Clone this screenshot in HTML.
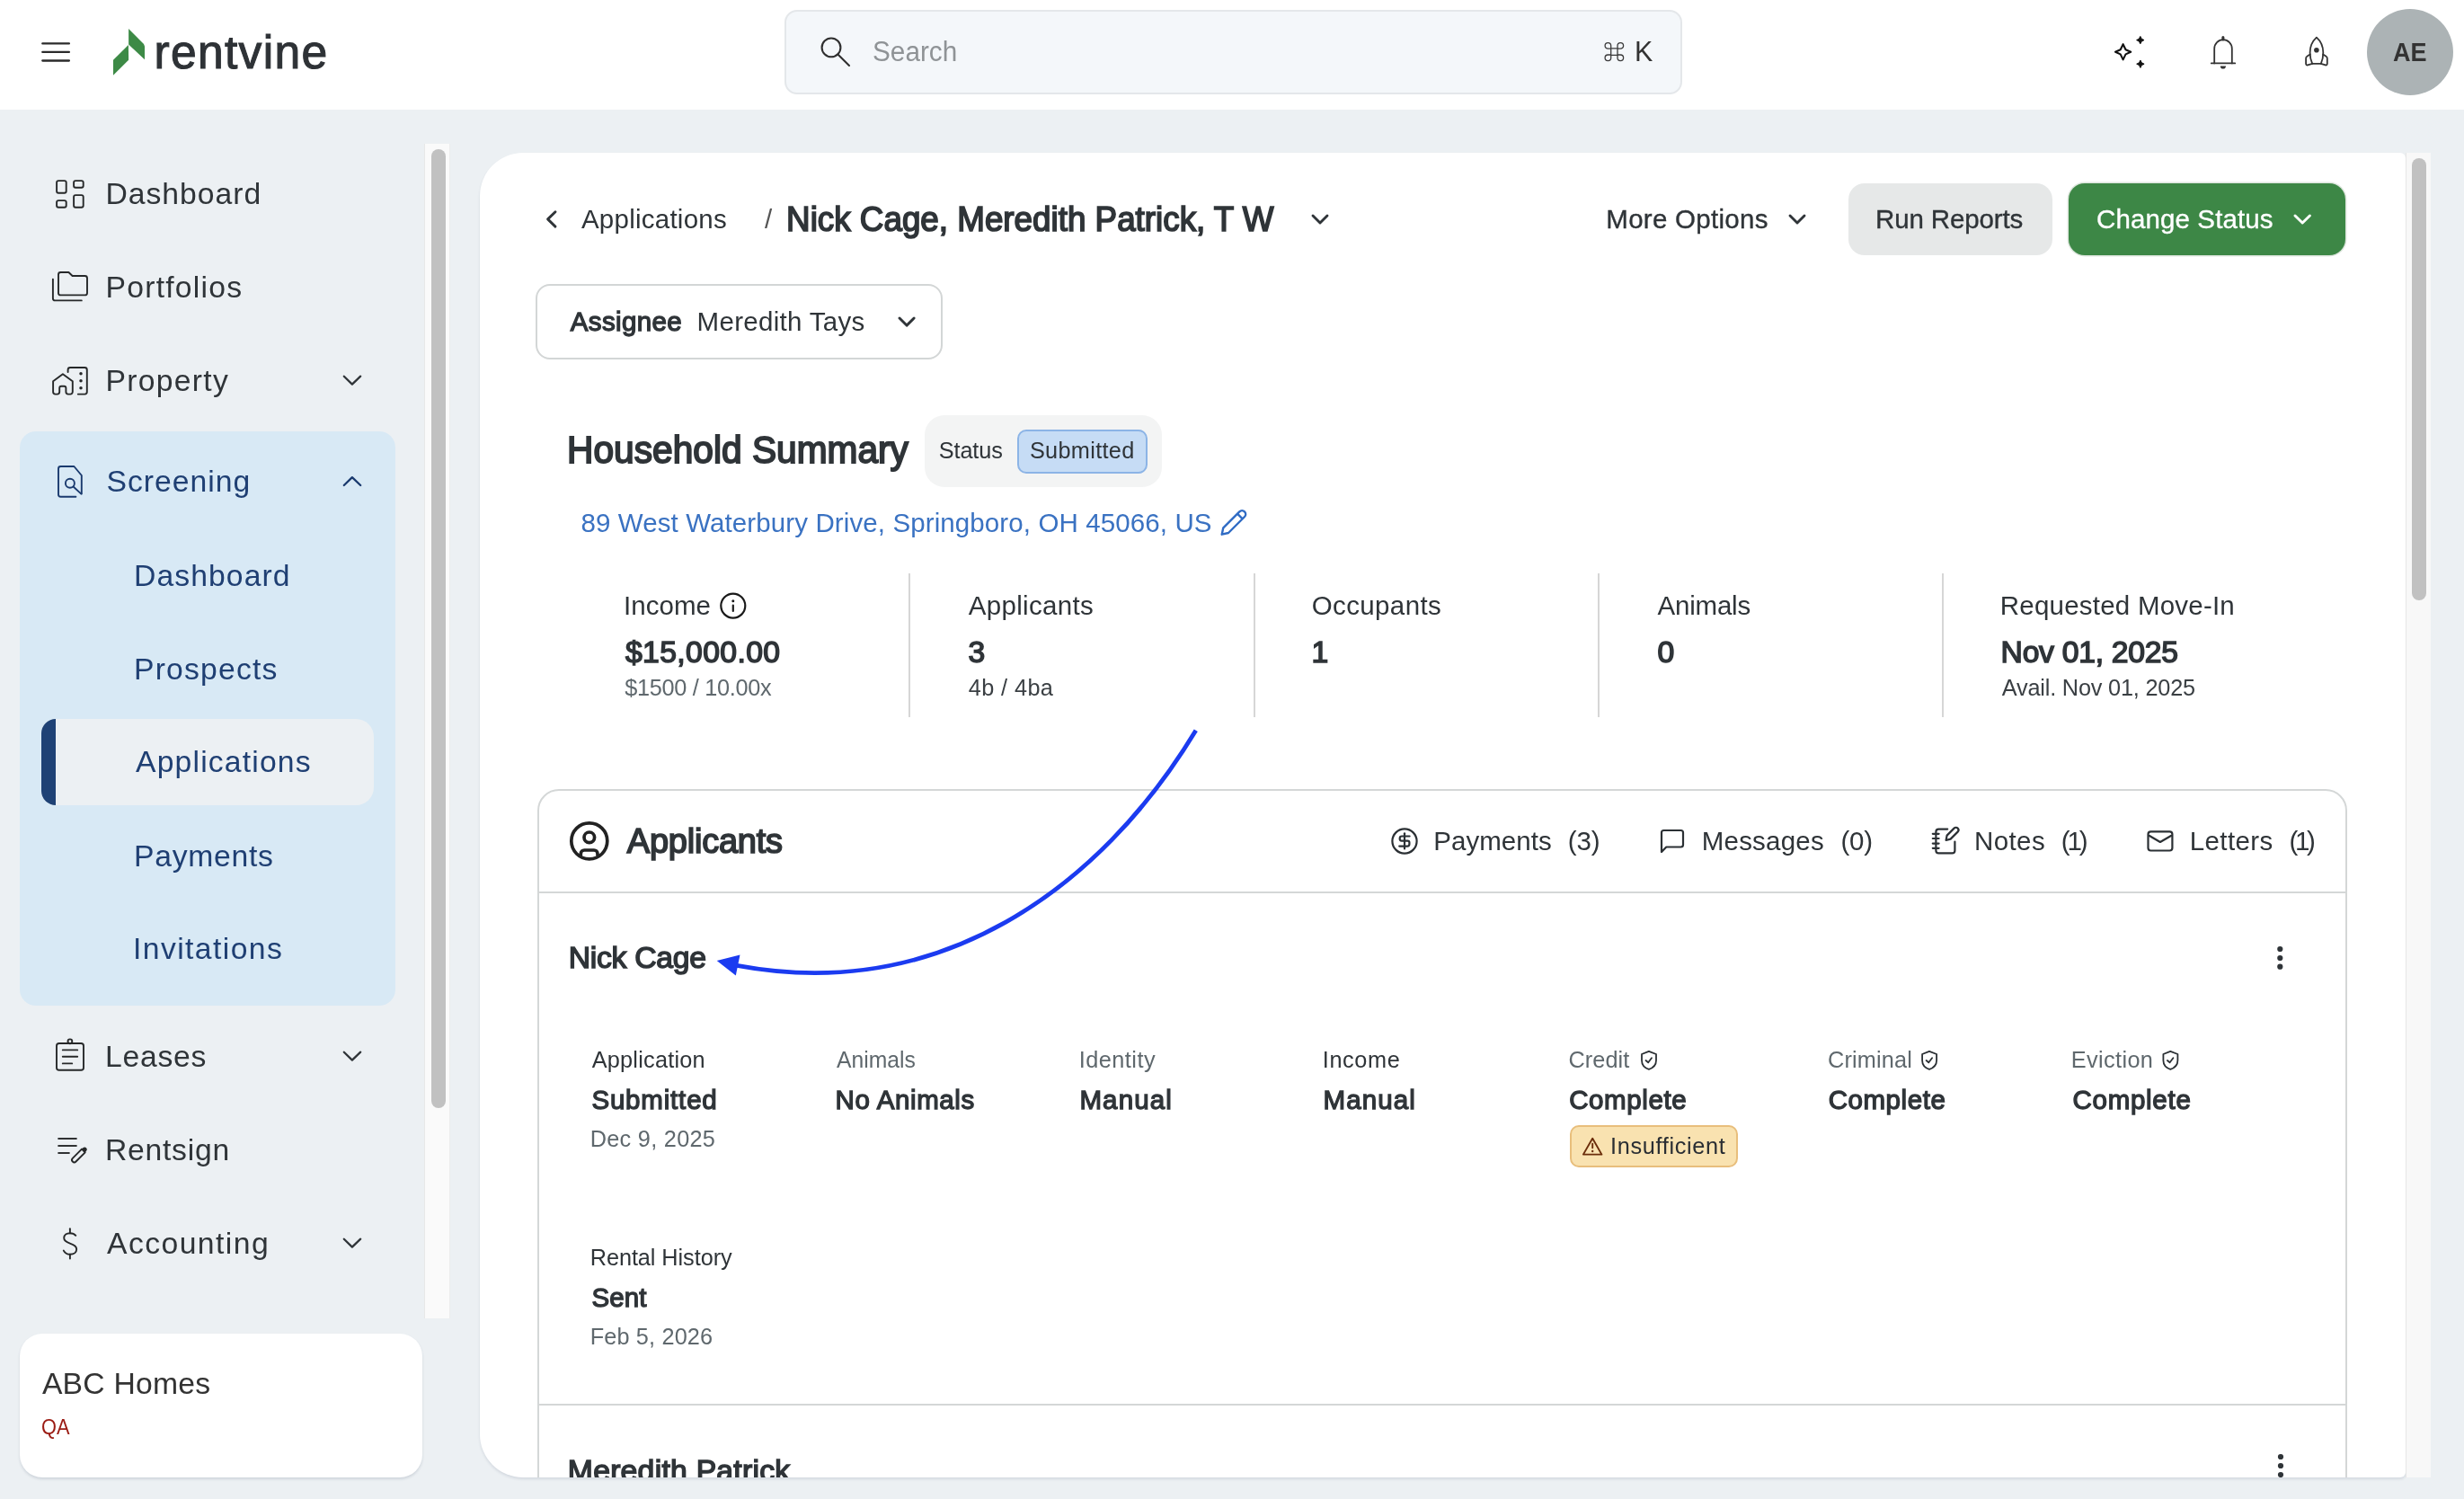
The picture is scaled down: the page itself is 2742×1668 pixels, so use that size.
<!DOCTYPE html>
<html><head><meta charset="utf-8"><title>Rentvine</title>
<style>
html,body{margin:0;padding:0;width:2742px;height:1668px;overflow:hidden;background:#ecf0f3;font-family:"Liberation Sans",sans-serif;}
.a{position:absolute;box-sizing:border-box;}
.t{position:absolute;line-height:0;white-space:nowrap;}
svg{position:absolute;overflow:visible;}
</style></head><body>
<!-- header -->
<div class="a" style="left:0;top:0;width:2742px;height:122px;background:#fff"></div>
<svg style="left:0;top:0" width="2742" height="122">
  <g stroke="#2b2b2b" stroke-width="2.3" stroke-linecap="round">
    <line x1="47.3" y1="48.4" x2="76.9" y2="48.4"/><line x1="47.3" y1="57.9" x2="76.9" y2="57.9"/><line x1="47.3" y1="67.5" x2="76.9" y2="67.5"/>
  </g>
  <g fill="#3d8a46">
    <polygon points="143.1,32 160,49 161,51.5 161,66.3 143.1,49.6"/>
    <polygon points="126,66.7 142.9,50 143.1,66.7 126,83.7"/>
  </g>
</svg>
<div class="a" style="left:872.6px;top:10.7px;width:999px;height:94.6px;border-radius:14px;background:#f4f7fa;border:2px solid #e4e7ea"></div>
<svg style="left:0;top:0" width="2742" height="122">
  <g fill="none" stroke="#2f2f2f" stroke-width="2.1" stroke-linecap="round">
    <circle cx="925" cy="52.9" r="10.4"/><line x1="932.4" y1="60.4" x2="945" y2="72.9"/>
  </g>
</svg>
<div class="a" style="left:2634px;top:10px;width:96px;height:96px;border-radius:50%;background:#acb3b5"></div>

<!-- sidebar -->
<div class="a" style="left:21.8px;top:480px;width:418px;height:639px;border-radius:18px;background:#d8e9f5"></div>
<div class="a" style="left:45.8px;top:800px;width:370px;height:96px;border-radius:16px 20px 20px 16px;background:#ecf0f3;overflow:hidden"><div class="a" style="left:0;top:0;width:16.2px;height:96px;background:#1f4275"></div></div>
<div class="a" style="left:472px;top:160px;width:29px;height:1307px;background:#fafafa;border-left:1.5px solid #e8e8e8;border-right:1px solid #ececec"></div>
<div class="a" style="left:480px;top:166px;width:16px;height:1067px;border-radius:8px;background:#c1c1c1"></div>
<div class="a" style="left:22px;top:1484px;width:448px;height:160px;border-radius:25px;background:#fff;box-shadow:0 2px 3px rgba(40,60,90,.15)"></div>

<!-- main card -->
<div class="a" style="left:534px;top:170px;width:2143px;height:1473.6px;border-radius:48px 6px 6px 48px;background:#fff;box-shadow:0 2px 3px rgba(40,60,90,.12);overflow:hidden">
  <div class="a" style="left:64px;top:708px;width:2014.3px;height:900px;border-radius:24px 24px 0 0;border:2px solid #d4d7d7"></div>
  <div class="a" style="left:64px;top:822px;width:2014.3px;height:2px;background:#d4d7d7"></div>
  <div class="a" style="left:64px;top:1391.8px;width:2014.3px;height:2px;background:#d4d7d7"></div>
</div>
<div class="a" style="left:2677px;top:170px;width:28px;height:1473.6px;background:#f8f8f8;border-left:1.5px solid #e6e6e6"></div>
<div class="a" style="left:2684px;top:176px;width:16px;height:492px;border-radius:8px;background:#c1c1c1"></div>

<!-- buttons -->
<div class="a" style="left:2056.5px;top:204px;width:227.5px;height:79.6px;border-radius:18px;background:#e6e8e8"></div>
<div class="a" style="left:2301.8px;top:204px;width:308.7px;height:79.6px;border-radius:18px;background:#3d8746;box-shadow:0 0 0 1.5px #dde6dd"></div>
<div class="a" style="left:596px;top:316px;width:453px;height:83.8px;border-radius:16px;border:2px solid #d3d6d6"></div>
<div class="a" style="left:1029px;top:461.8px;width:263.5px;height:80px;border-radius:22px;background:#f3f4f4"></div>
<div class="a" style="left:1131.8px;top:478.3px;width:145px;height:48.4px;border-radius:10px;background:#c6dcf5;border:2px solid #8cb4e6"></div>
<div class="a" style="left:1746.5px;top:1252px;width:187px;height:47.4px;border-radius:10px;background:#f9e2b0;border:2px solid #e8be7c"></div>

<!-- dividers -->
<div class="a" style="left:1010.6px;top:638px;width:2px;height:160px;background:#d6d6d6"></div>
<div class="a" style="left:1394.5px;top:638px;width:2px;height:160px;background:#d6d6d6"></div>
<div class="a" style="left:1778px;top:638px;width:2px;height:160px;background:#d6d6d6"></div>
<div class="a" style="left:2160.8px;top:638px;width:2px;height:160px;background:#d6d6d6"></div>

<svg style="left:0;top:0;overflow:hidden" width="2742" height="1643.6"><g fill="#2f3438"><circle cx="2538" cy="1621" r="3.1"/><circle cx="2538" cy="1631" r="3.1"/><circle cx="2538" cy="1641" r="3.1"/></g></svg>
<!-- chevrons -->
<svg style="left:0;top:0" width="2742" height="1668">
  <g fill="none" stroke="#2f3438" stroke-width="2.9" stroke-linecap="round" stroke-linejoin="round">
    <polyline points="618,235.7 609.6,243.9 618,252.1"/>
    <polyline points="1461,240 1469,248 1477,240"/>
    <polyline points="1992,240 2000,248 2008,240"/>
    <polyline points="1001,354 1009,362.1 1017.1,354"/>
  </g>
  <g fill="none" stroke="#2f3438" stroke-width="2.3" stroke-linecap="round" stroke-linejoin="round">
    <polyline points="382.8,418.7 391.9,427.6 401.2,418.7"/>
    <polyline points="382.8,1170.7 391.9,1179.6 401.2,1170.7"/>
    <polyline points="382.8,1378.7 391.9,1387.6 401.2,1378.7"/>
  </g>
  <polyline points="382.8,540 391.9,531.2 401.2,540" fill="none" stroke="#1a3a6e" stroke-width="2.3" stroke-linecap="round" stroke-linejoin="round"/>
  <polyline points="2554,240 2562.2,248 2570.4,240" fill="none" stroke="#fff" stroke-width="3" stroke-linecap="round" stroke-linejoin="round"/>
  <!-- kebabs -->
  <g fill="#2f3438"><circle cx="2537.3" cy="1056" r="3.1"/><circle cx="2537.3" cy="1066" r="3.1"/><circle cx="2537.3" cy="1075.7" r="3.1"/></g>
  <!-- arrow -->
  <path d="M1330.8,812.8 C1223.4,990.2 1045.3,1116.3 820,1074.4" fill="none" stroke="#1b3bf0" stroke-width="4.8"/>
  <polygon points="797.7,1069 823.5,1062.6 818.8,1085.4" fill="#1b3bf0"/>
</svg>

<svg style="left:0;top:0" width="2742" height="1668">
 <!-- sidebar icons -->
 <g fill="none" stroke="#262829" stroke-width="1.9" stroke-linecap="round" stroke-linejoin="round">
  <rect x="63.1" y="201.1" width="10.6" height="13.6" rx="2"/>
  <rect x="82.1" y="201.1" width="10.6" height="7.6" rx="2"/>
  <rect x="63.1" y="223.1" width="10.6" height="7.6" rx="2"/>
  <rect x="82.1" y="217.1" width="10.6" height="13.6" rx="2"/>
  <!-- portfolios -->
  <path d="M65,305.5 a2.5,2.5 0 0 1 2.5,-2.5 H76.4 L80.6,307 H94.5 a2.5,2.5 0 0 1 2.5,2.5 V325.9 a2.5,2.5 0 0 1 -2.5,2.5 H67.5 a2.5,2.5 0 0 1 -2.5,-2.5 Z"/>
  <path d="M58.9,310.6 V331.9 a2.5,2.5 0 0 0 2.5,2.5 H90.8"/>
  <!-- property -->
  <path d="M59.1,436.1 V424.2 L69.9,416.2 L80.8,424.2 V436.1 a2.5,2.5 0 0 1 -2.5,2.5 H75.9 a2.5,2.5 0 0 1 -2.5,-2.5 V431.8 a2,2 0 0 0 -2,-2 H68.2 a2,2 0 0 0 -2,2 V436.1 a2.5,2.5 0 0 1 -2.5,2.5 H61.6 a2.5,2.5 0 0 1 -2.5,-2.5 Z"/>
  <path d="M75.6,414 V411.5 a2.5,2.5 0 0 1 2.5,-2.5 H94.3 a2.5,2.5 0 0 1 2.5,2.5 V436.1 a2.5,2.5 0 0 1 -2.5,2.5 H86.8"/>
  <!-- leases -->
  <rect x="63" y="1161" width="30" height="29.8" rx="2.8"/>
  <circle cx="77.9" cy="1158.8" r="2.4"/>
  <line x1="69.8" y1="1168.4" x2="86.2" y2="1168.4"/><line x1="69.8" y1="1175.8" x2="86.2" y2="1175.8"/><line x1="69.8" y1="1183.4" x2="80.2" y2="1183.4"/>
  <!-- rentsign -->
  <g stroke-linecap="butt"><line x1="64.4" y1="1267" x2="85.6" y2="1267"/><line x1="64.4" y1="1275" x2="85.6" y2="1275"/><line x1="64.4" y1="1283" x2="77.6" y2="1283"/></g>
  <path d="M84.5,1292.5 a2.6,2.6 0 0 1 -3.7,-3.7 L91,1278.6 L94.7,1282.3 Z"/>
  <!-- $ -->
  <line x1="77.9" y1="1367.2" x2="77.9" y2="1372.2"/><line x1="77.9" y1="1395.8" x2="77.9" y2="1400.6"/>
  <path d="M84.3,1374.8 C82.5,1372.6 80.4,1372.2 77.9,1372.2 C74.2,1372.2 71.2,1374.2 71.2,1377.6 C71.2,1381 74,1382.3 77.9,1383.6 C81.9,1384.9 85.2,1386.3 85.2,1390 C85.2,1393.6 82.2,1395.8 77.9,1395.8 C74.6,1395.8 72.3,1394.4 70.8,1391.6"/>
 </g>
 <path d="M91,1278.6 L94.7,1282.3 L96,1281 a2.6,2.6 0 0 0 -3.7,-3.7 Z" fill="#262829"/>
 <g fill="#262829"><circle cx="90" cy="415.8" r="1.75"/><circle cx="90" cy="423.8" r="1.75"/><circle cx="90" cy="431.8" r="1.75"/></g>
 <!-- screening icon -->
 <g fill="none" stroke="#1a3a6e" stroke-width="1.9" stroke-linecap="round" stroke-linejoin="round">
  <path d="M84.4,552.8 H67.5 a2.5,2.5 0 0 1 -2.5,-2.5 V521.5 a2.5,2.5 0 0 1 2.5,-2.5 H82.4 L90.8,529 V549.4"/>
  <circle cx="77.9" cy="537.8" r="5"/>
  <line x1="81.6" y1="541.5" x2="90.4" y2="549.6"/>
 </g>

 <!-- header icons -->
 <g fill="none" stroke="#111" stroke-width="2.1" stroke-linejoin="round">
  <path d="M2362.60,49.20 L2365.50,55.20 L2371.20,57.80 L2365.50,60.40 L2362.60,66.40 L2359.70,60.40 L2354.00,57.80 L2359.70,55.20 Z"/>
 </g>
 <g fill="#111" stroke="#111" stroke-width="1" stroke-linejoin="round">
  <path d="M2381.80,40.40 L2383.20,43.20 L2386.00,44.60 L2383.20,46.00 L2381.80,48.80 L2380.40,46.00 L2377.60,44.60 L2380.40,43.20 Z"/>
  <path d="M2381.90,67.00 L2383.30,69.80 L2386.10,71.20 L2383.30,72.60 L2381.90,75.40 L2380.50,72.60 L2377.70,71.20 L2380.50,69.80 Z"/>
 </g>
 <g fill="none" stroke="#333" stroke-width="1.8" stroke-linecap="round" stroke-linejoin="round">
  <path d="M2464.2,70.4 V54 a9.8,9.8 0 0 1 19.6,0 V70.4"/>
  <line x1="2460.8" y1="70.4" x2="2487.2" y2="70.4"/>
  <line x1="2473.9" y1="41.6" x2="2473.9" y2="44" stroke-width="3"/>
  <path d="M2577.9,41.6 C2572,47 2570.6,54 2570.6,58.5 C2570.6,63 2571.6,67.5 2573.2,70.8 H2582.8 C2584.4,67.5 2585.3,63 2585.3,58.5 C2585.3,54 2584,47 2577.9,41.6 Z"/>
  <path d="M2570.7,60.6 L2567.3,62.8 a2.5,2.5 0 0 0 -1.2,2.1 V71 a1.5,1.5 0 0 0 2,1.4 L2573.2,70.8"/>
  <path d="M2585.2,60.6 L2588.6,62.8 a2.5,2.5 0 0 1 1.2,2.1 V71 a1.5,1.5 0 0 1 -2,1.4 L2582.8,70.8"/>
 </g>
 <path d="M2470.8,73.4 H2477 a3.1,3.1 0 0 1 -6.2,0 Z" fill="#333"/>
 <circle cx="2577.9" cy="55.8" r="2.8" fill="#333"/>
 <!-- cmd symbol -->
 <g fill="none" stroke="#3a3a3a" stroke-width="1.3">
  <path d="M1792.7,53.8 H1800 V61.4 H1792.7 Z"/>
  <path d="M1792.7,53.8 V50.9 a3.3,3.3 0 1 0 -3.3,3.3 H1792.7"/>
  <path d="M1800,53.8 V50.9 a3.3,3.3 0 1 1 3.3,3.3 H1800"/>
  <path d="M1792.7,61.4 V64.3 a3.3,3.3 0 1 1 -3.3,-3.3 H1792.7"/>
  <path d="M1800,61.4 V64.3 a3.3,3.3 0 1 0 3.3,-3.3 H1800"/>
 </g>

 <!-- info icon -->
 <g fill="none" stroke="#1a1a1a" stroke-width="2.2" stroke-linecap="round">
  <circle cx="815.8" cy="674.1" r="13.5"/>
  <line x1="815.8" y1="673.7" x2="815.8" y2="680"/>
 </g>
 <circle cx="815.8" cy="668.7" r="1.5" fill="#1a1a1a"/>
 <!-- pencil -->
 <g fill="none" stroke="#2f6bc4" stroke-width="2.4" stroke-linejoin="round">
  <path d="M1359.7,594.7 L1361.3,587.3 L1379.3,569.3 a4,4 0 0 1 5.7,5.7 L1367,593 Z"/>
  <line x1="1377" y1="571.6" x2="1382.7" y2="577.3"/>
 </g>
 <!-- applicants person icon -->
 <g fill="none" stroke="#222" stroke-width="3.7">
  <circle cx="655.8" cy="935.8" r="20"/>
  <circle cx="655.8" cy="931.8" r="5.8"/>
  <path d="M646.3,952.5 V950 a4,4 0 0 1 4,-4 H661 a4,4 0 0 1 4,4 V952.5"/>
 </g>
 <!-- tab icons -->
 <g fill="none" stroke="#2b3034" stroke-width="2.2" stroke-linecap="round" stroke-linejoin="round">
  <circle cx="1563" cy="936" r="13.6"/>
  <line x1="1563" y1="927.3" x2="1563" y2="944.4"/>
  <path d="M1568.6,930.5 H1560 a2.3,2.3 0 0 0 -2.3,2.3 V933.6 a2,2 0 0 0 2,2 H1566.4 a2,2 0 0 1 2,2 V939.3 a2.3,2.3 0 0 1 -2.3,2.3 H1557.2"/>
  <path d="M1849,948 V926.5 a2.5,2.5 0 0 1 2.5,-2.5 H1870.5 a2.5,2.5 0 0 1 2.5,2.5 V940 a2.5,2.5 0 0 1 -2.5,2.5 H1854.3 Z"/>
  <path d="M2167.2,922.6 H2157.4 a3,3 0 0 0 -3,3 V946.4 a3,3 0 0 0 3,3 H2172.4 a3,3 0 0 0 3,-3 V936.6"/>
  <line x1="2150.8" y1="927.8" x2="2157.6" y2="927.8"/><line x1="2150.8" y1="933" x2="2157.6" y2="933"/><line x1="2150.8" y1="938.6" x2="2157.6" y2="938.6"/><line x1="2150.8" y1="943.8" x2="2157.6" y2="943.8"/>
  <path d="M2165.6,935 L2166.6,929.6 L2174.6,921.6 a2.8,2.8 0 0 1 4,4 L2170.6,933.6 Z"/>
  <rect x="2390.5" y="925.3" width="26.9" height="21.2" rx="3"/>
  <path d="M2391.5,929.8 L2403.9,937 L2416.4,929.8"/>
 </g>
 <!-- shields -->
 <g fill="none" stroke="#2b3034" stroke-width="1.8" stroke-linejoin="round" stroke-linecap="round">
  <g transform="translate(0,0)"><path d="M1834.9,1169.9 L1843,1173 V1180 C1843,1185 1839.5,1188.3 1834.9,1189.9 C1830.3,1188.3 1827,1185 1827,1180 V1173 Z"/><path d="M1831.5,1180 L1834.2,1182.3 L1838,1177.3"/></g>
  <g transform="translate(312.1,0)"><path d="M1834.9,1169.9 L1843,1173 V1180 C1843,1185 1839.5,1188.3 1834.9,1189.9 C1830.3,1188.3 1827,1185 1827,1180 V1173 Z"/><path d="M1831.5,1180 L1834.2,1182.3 L1838,1177.3"/></g>
  <g transform="translate(580.4,0)"><path d="M1834.9,1169.9 L1843,1173 V1180 C1843,1185 1839.5,1188.3 1834.9,1189.9 C1830.3,1188.3 1827,1185 1827,1180 V1173 Z"/><path d="M1831.5,1180 L1834.2,1182.3 L1838,1177.3"/></g>
 </g>
 <!-- warning -->
 <g fill="none" stroke="#6b2d0a" stroke-width="1.9" stroke-linejoin="round" stroke-linecap="round">
  <path d="M1772.2,1266.7 L1782.4,1284.6 H1761.9 Z"/>
  <line x1="1772.2" y1="1272.7" x2="1772.2" y2="1277.3"/>
 </g>
 <circle cx="1772.2" cy="1281" r="1.2" fill="#6b2d0a"/>
</svg>


<div style="position:absolute;left:0;top:0;width:2742px;height:1668px;will-change:transform">
<div class="t" style="left:171.5px;top:58.1px;font-size:51.59px;font-weight:400;color:#2e3236;letter-spacing:1.31px;-webkit-text-stroke:1.1px #2e3236;">rentvine</div>
<div class="t" style="left:970.7px;top:57.4px;font-size:30.43px;font-weight:400;color:#8f9396;letter-spacing:0.00px;transform:scaleX(0.977);transform-origin:1.0px 0;">Search</div>
<div class="t" style="left:1819.0px;top:57.4px;font-size:30.43px;font-weight:400;color:#333;letter-spacing:0.00px;">K</div>
<div class="t" style="left:2663.2px;top:57.5px;font-size:30.00px;font-weight:700;color:#333;letter-spacing:0.00px;transform:scaleX(0.900);transform-origin:0.0px 0;">AE</div>
<div class="t" style="left:117.5px;top:215.0px;font-size:33.71px;font-weight:400;color:#2f3438;letter-spacing:0.97px;">Dashboard</div>
<div class="t" style="left:117.5px;top:318.9px;font-size:33.71px;font-weight:400;color:#2f3438;letter-spacing:1.23px;">Portfolios</div>
<div class="t" style="left:117.5px;top:423.3px;font-size:33.71px;font-weight:400;color:#2f3438;letter-spacing:1.28px;">Property</div>
<div class="t" style="left:118.5px;top:535.3px;font-size:33.71px;font-weight:400;color:#1f3f73;letter-spacing:0.99px;">Screening</div>
<div class="t" style="left:149.0px;top:639.8px;font-size:33.71px;font-weight:400;color:#1f3f73;letter-spacing:1.08px;">Dashboard</div>
<div class="t" style="left:149.0px;top:744.1px;font-size:33.71px;font-weight:400;color:#1f3f73;letter-spacing:1.20px;">Prospects</div>
<div class="t" style="left:151.0px;top:847.3px;font-size:33.71px;font-weight:400;color:#1f3f73;letter-spacing:1.17px;">Applications</div>
<div class="t" style="left:149.0px;top:951.9px;font-size:33.71px;font-weight:400;color:#1f3f73;letter-spacing:0.71px;">Payments</div>
<div class="t" style="left:148.0px;top:1055.3px;font-size:33.71px;font-weight:400;color:#1f3f73;letter-spacing:1.41px;">Invitations</div>
<div class="t" style="left:117.0px;top:1175.3px;font-size:33.71px;font-weight:400;color:#2f3438;letter-spacing:0.73px;">Leases</div>
<div class="t" style="left:117.0px;top:1279.0px;font-size:33.71px;font-weight:400;color:#2f3438;letter-spacing:0.73px;">Rentsign</div>
<div class="t" style="left:119.0px;top:1382.5px;font-size:33.71px;font-weight:400;color:#2f3438;letter-spacing:1.44px;">Accounting</div>
<div class="t" style="left:46.9px;top:1539.0px;font-size:33.71px;font-weight:400;color:#333;letter-spacing:0.22px;">ABC Homes</div>
<div class="t" style="left:46.1px;top:1587.7px;font-size:23.48px;font-weight:400;color:#9b1c14;letter-spacing:0.00px;transform:scaleX(0.929);transform-origin:1.0px 0;">QA</div>
<div class="t" style="left:646.9px;top:243.5px;font-size:29.51px;font-weight:400;color:#2f3438;letter-spacing:0.25px;">Applications</div>
<div class="t" style="left:851.0px;top:243.5px;font-size:29.51px;font-weight:400;color:#555;letter-spacing:0.00px;">/</div>
<div class="t" style="left:875.4px;top:243.7px;font-size:37.97px;font-weight:400;color:#2f3438;letter-spacing:0.00px;-webkit-text-stroke:1.71px #2f3438;transform:scaleX(0.969);transform-origin:3.0px 0;">Nick Cage, Meredith Patrick, T W</div>
<div class="t" style="left:1787.3px;top:243.6px;font-size:29.51px;font-weight:400;color:#2f3438;letter-spacing:0.28px;-webkit-text-stroke:0.35px #2f3438;">More Options</div>
<div class="t" style="left:2087.0px;top:243.6px;font-size:29.51px;font-weight:400;color:#2f3438;letter-spacing:-0.13px;-webkit-text-stroke:0.35px #2f3438;">Run Reports</div>
<div class="t" style="left:2333.0px;top:243.6px;font-size:29.51px;font-weight:400;color:#ffffff;letter-spacing:0.12px;-webkit-text-stroke:0.35px #ffffff;">Change Status</div>
<div class="t" style="left:634.8px;top:357.7px;font-size:29.51px;font-weight:400;color:#2f3438;letter-spacing:0.36px;-webkit-text-stroke:1.33px #2f3438;">Assignee</div>
<div class="t" style="left:775.6px;top:357.7px;font-size:29.51px;font-weight:400;color:#2f3438;letter-spacing:0.29px;">Meredith Tays</div>
<div class="t" style="left:630.8px;top:501.3px;font-size:42.17px;font-weight:400;color:#2f3438;letter-spacing:0.00px;-webkit-text-stroke:1.90px #2f3438;transform:scaleX(0.965);transform-origin:3.0px 0;">Household Summary</div>
<div class="t" style="left:1044.8px;top:501.4px;font-size:25.29px;font-weight:400;color:#2f3438;letter-spacing:-0.14px;">Status</div>
<div class="t" style="left:1145.9px;top:501.4px;font-size:25.29px;font-weight:400;color:#2f3438;letter-spacing:0.32px;">Submitted</div>
<div class="t" style="left:646.4px;top:581.5px;font-size:29.51px;font-weight:400;color:#3a72c2;letter-spacing:0.11px;">89 West Waterbury Drive, Springboro, OH 45066, US</div>
<div class="t" style="left:694.1px;top:673.7px;font-size:29.51px;font-weight:400;color:#2f3438;letter-spacing:0.03px;">Income</div>
<div class="t" style="left:696.0px;top:725.3px;font-size:33.71px;font-weight:400;color:#2f3438;letter-spacing:0.37px;-webkit-text-stroke:1.52px #2f3438;">$15,000.00</div>
<div class="t" style="left:695.2px;top:765.2px;font-size:25.29px;font-weight:400;color:#5f686d;letter-spacing:-0.30px;">$1500 / 10.00x</div>
<div class="t" style="left:1077.7px;top:673.7px;font-size:29.51px;font-weight:400;color:#2f3438;letter-spacing:0.33px;">Applicants</div>
<div class="t" style="left:1077.5px;top:725.3px;font-size:33.71px;font-weight:400;color:#2f3438;letter-spacing:0.00px;-webkit-text-stroke:1.52px #2f3438;">3</div>
<div class="t" style="left:1077.7px;top:765.2px;font-size:25.29px;font-weight:400;color:#3a3f43;letter-spacing:0.41px;">4b / 4ba</div>
<div class="t" style="left:1459.7px;top:673.7px;font-size:29.51px;font-weight:400;color:#2f3438;letter-spacing:0.38px;">Occupants</div>
<div class="t" style="left:1459.5px;top:725.3px;font-size:33.71px;font-weight:400;color:#2f3438;letter-spacing:0.00px;-webkit-text-stroke:1.52px #2f3438;">1</div>
<div class="t" style="left:1844.6px;top:673.7px;font-size:29.51px;font-weight:400;color:#2f3438;letter-spacing:-0.23px;">Animals</div>
<div class="t" style="left:1844.4px;top:725.3px;font-size:33.71px;font-weight:400;color:#2f3438;letter-spacing:0.00px;-webkit-text-stroke:1.52px #2f3438;">0</div>
<div class="t" style="left:2225.8px;top:673.7px;font-size:29.51px;font-weight:400;color:#2f3438;letter-spacing:0.22px;">Requested Move-In</div>
<div class="t" style="left:2226.6px;top:725.3px;font-size:33.71px;font-weight:400;color:#2f3438;letter-spacing:-0.28px;-webkit-text-stroke:1.52px #2f3438;">Nov 01, 2025</div>
<div class="t" style="left:2227.8px;top:765.2px;font-size:25.29px;font-weight:400;color:#3a3f43;letter-spacing:-0.19px;">Avail. Nov 01, 2025</div>
<div class="t" style="left:697.8px;top:935.5px;font-size:37.97px;font-weight:400;color:#2f3438;letter-spacing:-0.22px;-webkit-text-stroke:1.71px #2f3438;">Applicants</div>
<div class="t" style="left:1595.3px;top:935.6px;font-size:29.51px;font-weight:400;color:#2f3438;letter-spacing:0.04px;">Payments</div>
<div class="t" style="left:1744.8px;top:935.6px;font-size:29.51px;font-weight:400;color:#2f3438;letter-spacing:-0.17px;">(3)</div>
<div class="t" style="left:1893.7px;top:935.6px;font-size:29.51px;font-weight:400;color:#2f3438;letter-spacing:0.23px;">Messages</div>
<div class="t" style="left:2048.5px;top:935.6px;font-size:29.51px;font-weight:400;color:#2f3438;letter-spacing:-0.22px;">(0)</div>
<div class="t" style="left:2197.1px;top:935.6px;font-size:29.51px;font-weight:400;color:#2f3438;letter-spacing:0.37px;">Notes</div>
<div class="t" style="left:2293.7px;top:935.6px;font-size:29.51px;font-weight:400;color:#2f3438;letter-spacing:-3.07px;">(1)</div>
<div class="t" style="left:2436.8px;top:935.6px;font-size:29.51px;font-weight:400;color:#2f3438;letter-spacing:0.36px;">Letters</div>
<div class="t" style="left:2547.5px;top:935.6px;font-size:29.51px;font-weight:400;color:#2f3438;letter-spacing:-3.32px;">(1)</div>
<div class="t" style="left:632.7px;top:1065.1px;font-size:33.71px;font-weight:400;color:#2f3438;letter-spacing:-0.28px;-webkit-text-stroke:1.52px #2f3438;">Nick Cage</div>
<div class="t" style="left:658.7px;top:1179.1px;font-size:25.29px;font-weight:400;color:#2f3438;letter-spacing:0.23px;">Application</div>
<div class="t" style="left:658.4px;top:1223.7px;font-size:29.51px;font-weight:400;color:#2f3438;letter-spacing:0.82px;-webkit-text-stroke:1.33px #2f3438;">Submitted</div>
<div class="t" style="left:656.7px;top:1267.0px;font-size:25.29px;font-weight:400;color:#5f686d;letter-spacing:0.29px;">Dec 9, 2025</div>
<div class="t" style="left:930.8px;top:1179.1px;font-size:25.29px;font-weight:400;color:#5f686d;letter-spacing:0.00px;transform:scaleX(0.977);transform-origin:0.0px 0;">Animals</div>
<div class="t" style="left:929.5px;top:1223.7px;font-size:29.51px;font-weight:400;color:#2f3438;letter-spacing:0.62px;-webkit-text-stroke:1.33px #2f3438;">No Animals</div>
<div class="t" style="left:1200.7px;top:1179.1px;font-size:25.29px;font-weight:400;color:#5f686d;letter-spacing:0.48px;">Identity</div>
<div class="t" style="left:1201.4px;top:1223.7px;font-size:29.51px;font-weight:400;color:#2f3438;letter-spacing:1.15px;-webkit-text-stroke:1.33px #2f3438;">Manual</div>
<div class="t" style="left:1471.8px;top:1179.1px;font-size:25.29px;font-weight:400;color:#2f3438;letter-spacing:0.60px;">Income</div>
<div class="t" style="left:1472.5px;top:1223.7px;font-size:29.51px;font-weight:400;color:#2f3438;letter-spacing:1.13px;-webkit-text-stroke:1.33px #2f3438;">Manual</div>
<div class="t" style="left:1745.5px;top:1179.1px;font-size:25.29px;font-weight:400;color:#5f686d;letter-spacing:0.08px;">Credit</div>
<div class="t" style="left:1746.2px;top:1223.7px;font-size:29.51px;font-weight:400;color:#2f3438;letter-spacing:0.59px;-webkit-text-stroke:1.33px #2f3438;">Complete</div>
<div class="t" style="left:2034.0px;top:1179.1px;font-size:25.29px;font-weight:400;color:#5f686d;letter-spacing:0.18px;">Criminal</div>
<div class="t" style="left:2034.7px;top:1223.7px;font-size:29.51px;font-weight:400;color:#2f3438;letter-spacing:0.55px;-webkit-text-stroke:1.33px #2f3438;">Complete</div>
<div class="t" style="left:2304.8px;top:1179.1px;font-size:25.29px;font-weight:400;color:#5f686d;letter-spacing:0.37px;">Eviction</div>
<div class="t" style="left:2306.5px;top:1223.7px;font-size:29.51px;font-weight:400;color:#2f3438;letter-spacing:0.72px;-webkit-text-stroke:1.33px #2f3438;">Complete</div>
<div class="t" style="left:1792.0px;top:1275.1px;font-size:25.29px;font-weight:400;color:#2a2e33;letter-spacing:0.68px;">Insufficient</div>
<div class="t" style="left:656.7px;top:1399.1px;font-size:25.29px;font-weight:400;color:#2f3438;letter-spacing:-0.06px;">Rental History</div>
<div class="t" style="left:658.4px;top:1443.7px;font-size:29.51px;font-weight:400;color:#2f3438;letter-spacing:0.16px;-webkit-text-stroke:1.33px #2f3438;">Sent</div>
<div class="t" style="left:656.7px;top:1487.0px;font-size:25.29px;font-weight:400;color:#5f686d;letter-spacing:0.15px;">Feb 5, 2026</div>
<div style="position:absolute;left:0;top:0;width:2742px;height:1643.6px;overflow:hidden">
<div class="t" style="left:631.8px;top:1635.9px;font-size:33.71px;font-weight:400;color:#2f3438;letter-spacing:0.26px;-webkit-text-stroke:1.52px #2f3438;">Meredith Patrick</div>
</div>
</div>
</body></html>
